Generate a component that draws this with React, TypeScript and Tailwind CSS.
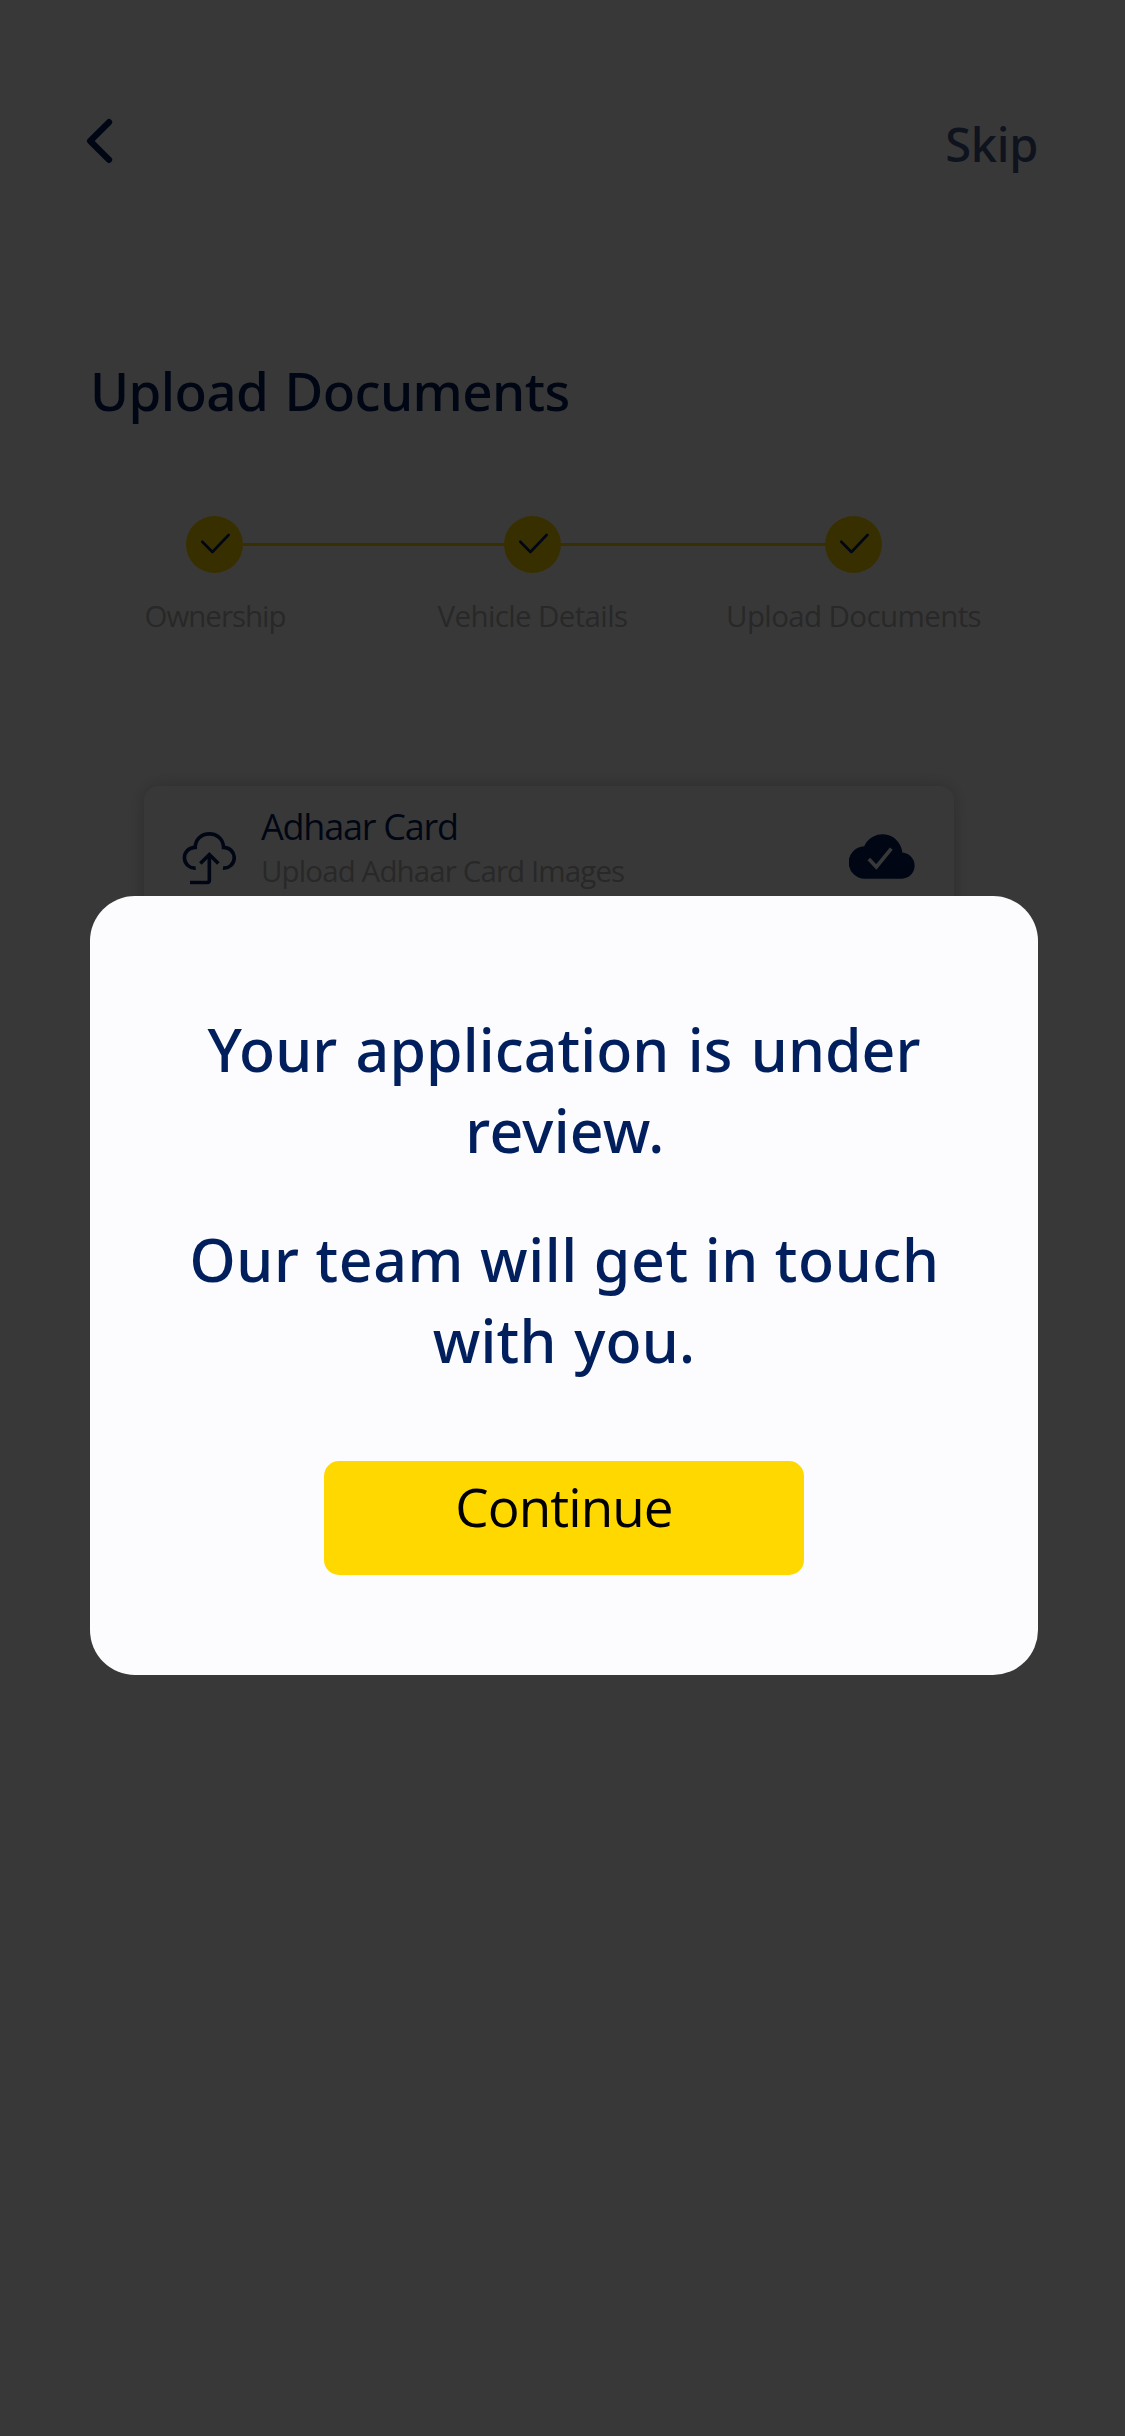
function ChevronIcon() {
  return (
    <svg width="27" height="46" viewBox="0 0 81 138" fill="none" stroke="#001f5c" strokeWidth="19" strokeLinecap="round" strokeLinejoin="round">
      <path d="M69 12.5 12.5 69 69 125.5" />
    </svg>
  );
}

function CloudUploadIcon() {
  return (
    <svg className="shrink-0" width="54" height="54" viewBox="0 0 162 162" fill="none" stroke="#001f5c" strokeWidth="11">
      <path d="M41 111.500A31.300 31.300 0 1 1 39.500 49C40 26 57 8.500 82 8.500C107 8.500 124 26 124.500 49A31.300 31.300 0 1 1 123 111.500" />
      <path d="M55 97.500 82 70.500 109 97.500M82 72V148Q82 154.500 76 154.500H24" />
    </svg>
  );
}

function CloudDoneIcon() {
  return (
    <svg width="67" height="46" viewBox="0 0 201 138">
      <path fill="#001f5c" d="M50 137A48.500 48.500 0 0 1 45.500 39.500A60 60 0 0 1 160 58.500A39.300 39.300 0 0 1 159 137Z" />
      <path fill="none" stroke="#fff" strokeWidth="11" d="M59.500 78 82 102 127 47" />
    </svg>
  );
}

function StepDot() {
  return (
    <div className="size-[57px] rounded-full bg-[#ffd700]">
      <svg width="57" height="57" viewBox="0 0 57 57" fill="none" stroke="#001f5c" strokeWidth="2.7" strokeLinecap="round" strokeLinejoin="round">
        <path d="M16.300 25.700 26.400 36 42.600 19" />
      </svg>
    </div>
  );
}

export default function App() {
  return (
    <div className="relative h-[2436px] w-[1125px] overflow-hidden bg-white font-['Open_Sans','Noto_Sans',sans-serif] text-[#001f5c]">
      <header className="flex items-start justify-between pt-[112px] pr-[87px] pl-[86px]">
        <div className="mt-[6px]">
          <ChevronIcon />
        </div>
        <span className="font-['Noto_Sans'] text-[47px] leading-[65px] font-medium tracking-[-0.27px] text-[#405785]">Skip</span>
      </header>

      <h1 className="mt-[177px] pl-[90px] font-['Noto_Sans'] text-[53px] leading-[73px] font-medium tracking-[-0.580px] [word-spacing:3px]">Upload Documents</h1>

      <div className="mt-[89px] ml-[186px] flex w-[696px] items-center">
        <StepDot />
        <div className="h-[3px] w-[261px] bg-[#ffd700]" />
        <StepDot />
        <div className="h-[3px] w-[264px] bg-[#ffd700]" />
        <StepDot />
      </div>
      <div className="mt-[22px] ml-[56px] grid grid-cols-[318px_317px_325px] text-center text-[29.500px] leading-[41px] text-[#b6b6b6]">
        <span className="tracking-[-1.010px]">Ownership</span>
        <span className="tracking-[-0.630px]">Vehicle Details</span>
        <span className="tracking-[-0.610px]">Upload Documents</span>
      </div>

      <section className="mt-[150px] ml-[144px] flex h-[165px] w-[810px] items-start rounded-[15px] bg-white pr-[38px] pl-[38px] shadow-[0_0_18px_rgba(0,0,0,0.22)]">
        <div className="mt-[45px]">
          <CloudUploadIcon />
        </div>
        <div className="mt-[17px] ml-[25px] flex-1">
          <div className="text-[36px] leading-[48px] tracking-[-1.230px]">Adhaar Card</div>
          <div className="-mt-px text-[29.500px] leading-[41px] tracking-[-0.890px] text-[#b6b6b6]">Upload Adhaar Card Images</div>
        </div>
        <div className="mt-[47px]">
          <CloudDoneIcon />
        </div>
      </section>

      <div className="absolute inset-0 bg-black/78 pt-[895.500px]">
        <div className="ml-[90px] flex h-[779.500px] w-[948px] flex-col items-center rounded-[45px] bg-[#fcfcff] pt-[113px]">
          <div className="text-center font-['Noto_Sans'] text-[59px] leading-[81px] font-medium">
            <p>
              <span className="tracking-[0.060px] [word-spacing:3px]">Your application is under</span>
              <br />
              <span className="pl-[2px] tracking-[0.260px]">review.</span>
            </p>
            <p className="mt-[48px]">
              <span className="pl-[1px] tracking-[0.620px]">Our team will get in touch</span>
              <br />
              <span className="tracking-[0.220px] [word-spacing:2px]">with you.</span>
            </p>
          </div>
          <button className="mt-[80.500px] flex h-[114px] w-[480px] items-start justify-center rounded-[15px] bg-[#ffd800] pt-[9px] text-[53px] leading-[73px] tracking-[-0.940px] text-black">
            Continue
          </button>
        </div>
      </div>
    </div>
  );
}
